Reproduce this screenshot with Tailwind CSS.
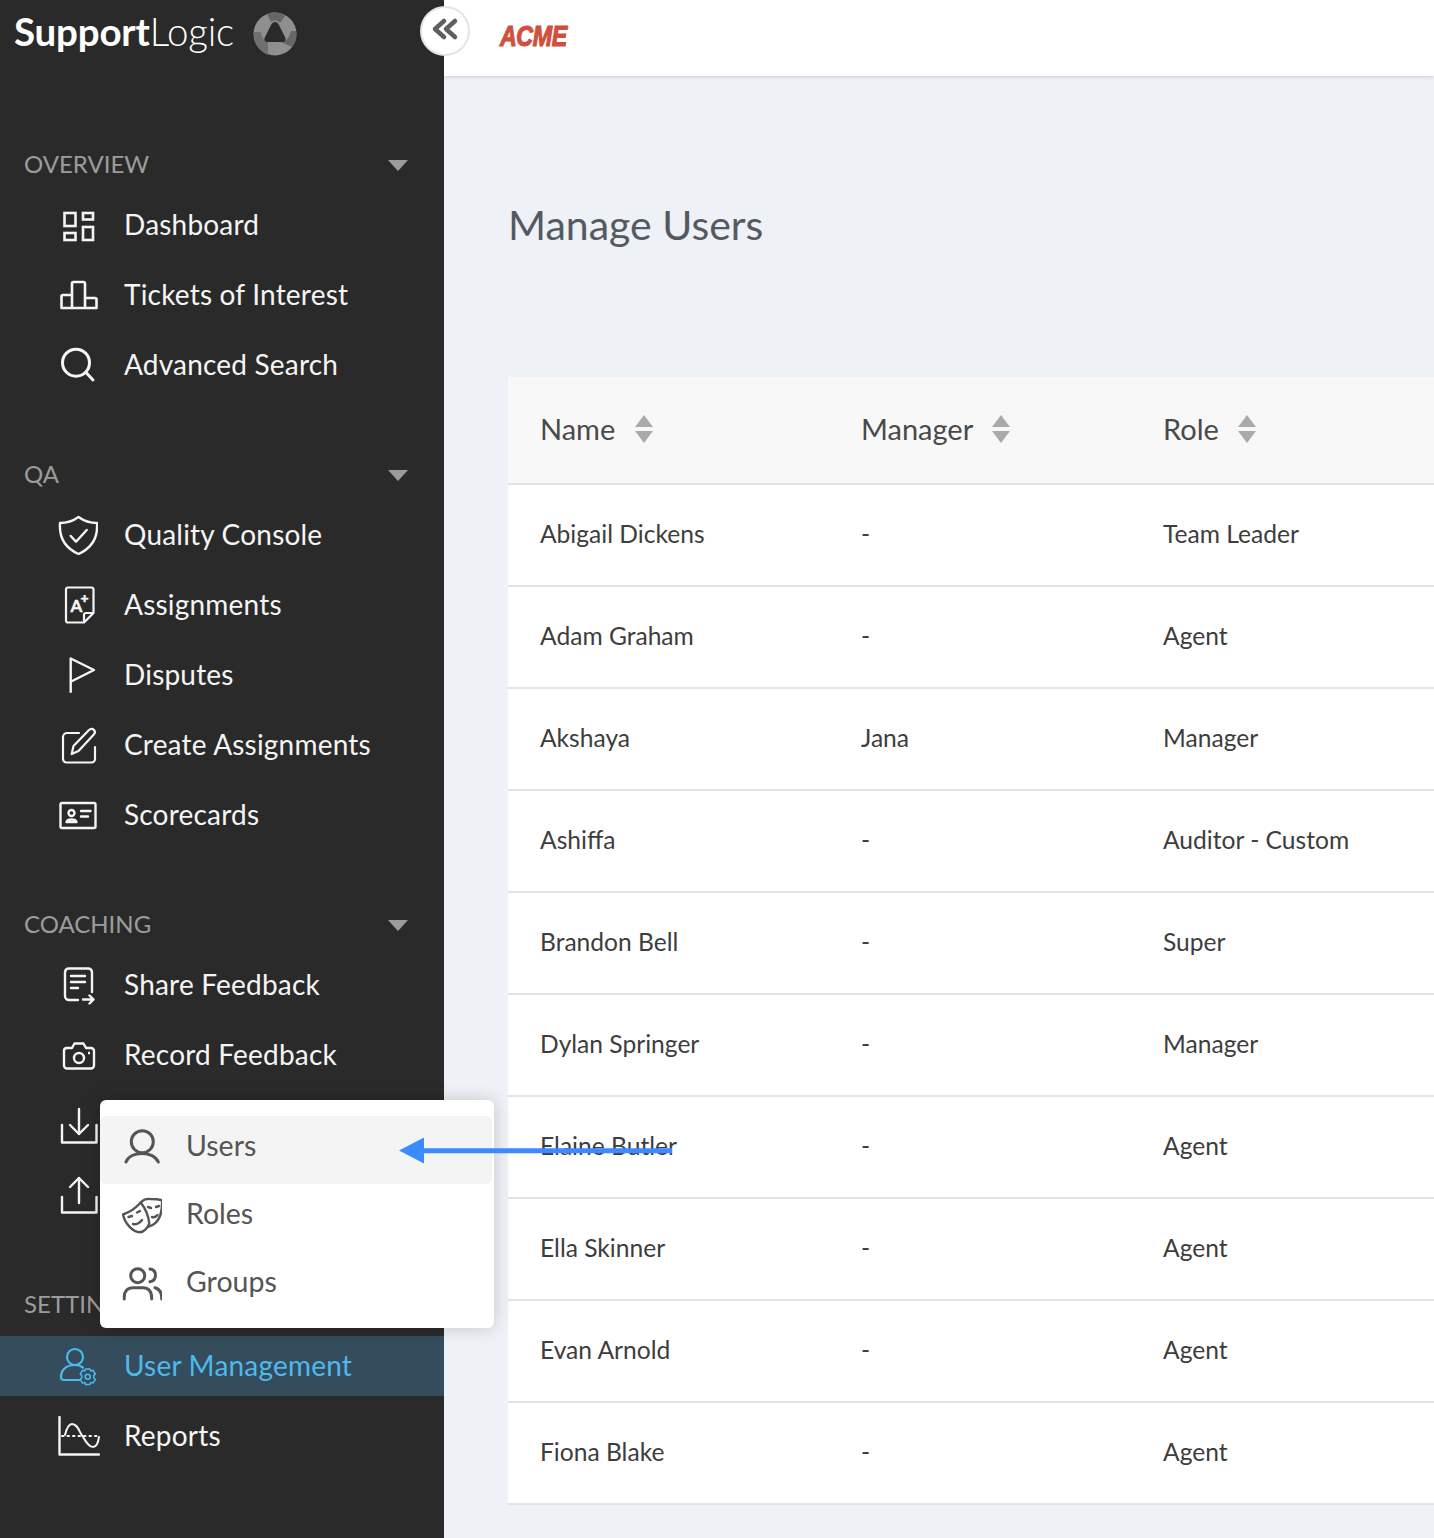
<!DOCTYPE html>
<html lang="en">
  <head>
    <meta charset="UTF-8" />
    <meta name="viewport" content="width=device-width, initial-scale=1.0" />
    <title>Manage Users</title>
    <script src="https://cdn.jsdelivr.net/npm/@tailwindcss/browser@4"></script>
  </head>
  <body class="font-['Lato',sans-serif]">
    <div class="relative flex w-[1434px] h-[1538px] overflow-hidden bg-[#eef1f6]">
      <!-- sidebar -->
      <aside class="w-[444px] shrink-0 bg-[#2a2a2a] text-[#f5f5f5] text-[28px] tracking-[0.2px] [&_a>span]:pb-[2px]">
        <div class="h-[140px] pl-[14px] pt-[8px] flex items-start gap-[20px]">
          <span class="text-[38.5px] leading-[46px] text-white tracking-[-0.2px]"><span class="font-bold">Support</span><span class="font-light">Logic</span></span>
          <svg class="w-[44px] h-[44px] mt-[4px] -ml-px" viewBox="0 0 44 44">
            <circle cx="22" cy="22" r="21.500" fill="#8f8f8f" />
            <path d="M14 2 C20 -1 28 0 32 4 L27 11 C24 8 21 8 18 10 Z" fill="#666" />
            <path d="M1 20 C0 30 6 39 15 43 L15 30 C11 29 8 25 8 20 Z" fill="#707070" />
            <path d="M43 19 C44 26 42 31 39 35 L28 30 C33 30 36 26 38 19 Z" fill="#666" />
            <path d="M22 10 C24 10 25.500 11.500 27 15 L32 25 C33.500 28 32 30 29 30 L15 30 C12 30 10.500 28 12 25 L17 15 C18.500 11.500 20 10 22 10 Z" fill="#2a2a2a" />
          </svg>
        </div>

        <section>
          <div class="h-[50px] pl-[24px] pr-[36px] pb-[2px] flex items-center justify-between text-[24px] tracking-normal text-[#9c9c9c]">
            <span>OVERVIEW</span>
            <span class="w-0 h-0 border-x-[10px] border-x-transparent border-t-[11px] border-t-[#9c9c9c] translate-y-px"></span>
          </div>
          <a class="h-[70px] pl-[58px] flex items-center gap-[26px]">
            <svg class="w-10 h-10" viewBox="0 0 40 40" fill="none" stroke="currentColor" stroke-width="2.600">
              <rect x="6.500" y="8" width="11" height="13" /><rect x="25" y="8" width="10" height="6.500" />
              <rect x="6.500" y="28" width="11" height="7" /><rect x="25" y="22" width="10" height="13" />
            </svg>
            <span>Dashboard</span>
          </a>
          <a class="h-[70px] pl-[58px] flex items-center gap-[26px]">
            <svg class="w-10 h-10" viewBox="0 0 40 40" fill="none" stroke="currentColor" stroke-width="2.600" stroke-linejoin="round">
              <path d="M14 33H3.500V21.500A1.500 1.500 0 0 1 5 20H14M14 33V8.500A1.500 1.500 0 0 1 15.500 7H25.500A1.500 1.500 0 0 1 27 8.500V33M14 33H27M27 23H37A1.500 1.500 0 0 1 38.500 24.500V33H27" />
            </svg>
            <span>Tickets of Interest</span>
          </a>
          <a class="h-[70px] pl-[58px] flex items-center gap-[26px]">
            <svg class="w-10 h-10" viewBox="0 0 40 40" fill="none" stroke="currentColor" stroke-width="3" stroke-linecap="round">
              <circle cx="18" cy="17.700" r="13.500" /><path d="M28 27.500L35 35" />
            </svg>
            <span>Advanced Search</span>
          </a>
        </section>

        <section class="mt-[50px]">
          <div class="h-[50px] pl-[24px] pr-[36px] pb-[2px] flex items-center justify-between text-[24px] tracking-normal text-[#9c9c9c]">
            <span>QA</span>
            <span class="w-0 h-0 border-x-[10px] border-x-transparent border-t-[11px] border-t-[#9c9c9c] translate-y-px"></span>
          </div>
          <a class="h-[70px] pl-[58px] flex items-center gap-[26px]">
            <svg class="w-10 h-10" viewBox="0 0 40 40" fill="none" stroke="currentColor" stroke-width="2.400" stroke-linecap="round" stroke-linejoin="round">
              <path d="M20.500 2C26 6 33 8 39 8C40 22 34 33 20.500 39C7 33 1 22 2 8C8 8 15 6 20.500 2Z" /><path d="M12.700 21L18 26.700L28.700 15" />
            </svg>
            <span>Quality Console</span>
          </a>
          <a class="h-[70px] pl-[58px] flex items-center gap-[26px]">
            <svg class="w-10 h-10" viewBox="0 0 40 40" fill="none" stroke="currentColor" stroke-width="2.200" stroke-linejoin="round">
              <path d="M10 2.500H33.500A2 2 0 0 1 35.500 4.500V28L26 37.500H10A2 2 0 0 1 8 35.500V4.500A2 2 0 0 1 10 2.500Z" /><path d="M35.500 28H28A2 2 0 0 0 26 30V37.500" />
              <text x="12.500" y="27" fill="currentColor" stroke="currentColor" stroke-width="0.500" font-size="17" font-weight="700">A</text>
              <text x="22.500" y="18" fill="currentColor" stroke="currentColor" stroke-width="0.500" font-size="14" font-weight="900">+</text>
            </svg>
            <span>Assignments</span>
          </a>
          <a class="h-[70px] pl-[58px] flex items-center gap-[26px]">
            <svg class="w-10 h-10" viewBox="0 0 40 40" fill="none" stroke="currentColor" stroke-width="2.400" stroke-linejoin="round">
              <path d="M12.700 37.700V3.500L36 15L12.700 26.700" />
            </svg>
            <span>Disputes</span>
          </a>
          <a class="h-[70px] pl-[58px] flex items-center gap-[26px]">
            <svg class="w-10 h-10" viewBox="0 0 40 40" fill="none" stroke="currentColor" stroke-width="2.200" stroke-linecap="round" stroke-linejoin="round">
              <path d="M21 8H9A4 4 0 0 0 5 12V34A3.500 3.500 0 0 0 8.500 37.500H33.500A3.500 3.500 0 0 0 37 34V22" />
              <path d="M13.700 29L15.500 21L31 5C32.500 3.500 34.500 3.500 35.800 4.800C37.200 6.200 37.200 8 35.800 9.500L20.500 26Z" />
            </svg>
            <span>Create Assignments</span>
          </a>
          <a class="h-[70px] pl-[58px] flex items-center gap-[26px]">
            <svg class="w-10 h-10" viewBox="0 0 40 40" fill="none" stroke="currentColor" stroke-width="2.400" stroke-linecap="round" stroke-linejoin="round">
              <rect x="2.500" y="8" width="35" height="25" rx="1.500" /><circle cx="13.500" cy="18" r="3" />
              <path d="M8.500 27C9.500 23.500 17.500 23.500 18.500 27Z" /><path d="M23 16H32.500M23 21.500H30" />
            </svg>
            <span>Scorecards</span>
          </a>
        </section>

        <section class="mt-[50px]">
          <div class="h-[50px] pl-[24px] pr-[36px] pb-[2px] flex items-center justify-between text-[24px] tracking-normal text-[#9c9c9c]">
            <span>COACHING</span>
            <span class="w-0 h-0 border-x-[10px] border-x-transparent border-t-[11px] border-t-[#9c9c9c] translate-y-px"></span>
          </div>
          <a class="h-[70px] pl-[58px] flex items-center gap-[26px]">
            <svg class="w-10 h-10" viewBox="0 0 40 40" fill="none" stroke="currentColor" stroke-width="2.400" stroke-linecap="round" stroke-linejoin="round">
              <path d="M20 35H11A4 4 0 0 1 7 31V7A4 4 0 0 1 11 3.500H30A4 4 0 0 1 34 7V27" />
              <path d="M13 11H27M13 17H27M13 23H20M25 34.500H35.500M31.500 30.500L35.500 34.500L31.500 38.500" />
            </svg>
            <span>Share Feedback</span>
          </a>
          <a class="h-[70px] pl-[58px] flex items-center gap-[26px]">
            <svg class="w-10 h-10" viewBox="0 0 40 40" fill="none" stroke="currentColor" stroke-width="2.400" stroke-linejoin="round">
              <path d="M8 13H14L16.500 8.500H25.500L28 13H33A3 3 0 0 1 36 16V30.500A3 3 0 0 1 33 33.500H9A3 3 0 0 1 6 30.500V16A3 3 0 0 1 8 13Z" />
              <circle cx="21" cy="23" r="5" /><path d="M30 18H32" />
            </svg>
            <span>Record Feedback</span>
          </a>
          <a class="h-[70px] pl-[58px] flex items-center gap-[26px]">
            <svg class="w-10 h-10" viewBox="0 0 40 40" fill="none" stroke="currentColor" stroke-width="2.400" stroke-linecap="round" stroke-linejoin="round">
              <path d="M21 4V29M12 20L21 29L30 20M4 20V37.500H38.500V20" />
            </svg>
          </a>
          <a class="h-[70px] pl-[58px] flex items-center gap-[26px]">
            <svg class="w-10 h-10" viewBox="0 0 40 40" fill="none" stroke="currentColor" stroke-width="2.400" stroke-linecap="round" stroke-linejoin="round">
              <path d="M21 3V28M12 12L21 3L30 12M4 22V37.500H38.500V22" />
            </svg>
          </a>
        </section>

        <section class="mt-[50px]">
          <div class="h-[50px] pl-[24px] pb-[2px] flex items-center text-[24px] tracking-normal text-[#9c9c9c]">
            <span>SETTINGS</span>
          </div>
          <a class="mt-[6px] h-[60px] pl-[58px] flex items-center gap-[26px] bg-[#344c5c] text-[#4fb9ee]">
            <svg class="w-10 h-10" viewBox="0 0 40 40" fill="none" stroke="currentColor" stroke-width="2.200" stroke-linecap="round" stroke-linejoin="round">
              <circle cx="17" cy="11" r="8" />
              <path d="M22 34H5.500A3 3 0 0 1 3 31C3 24 8 19 17 19C20 19 23 20 25 21.500" />
              <circle cx="29.700" cy="30.700" r="2.500" stroke-width="1.500" />
              <path d="M27.500 23H32L32.800 25L35 24.300L37.300 28L35.700 29.600V31.800L37.300 33.400L35 37.100L32.800 36.400L32 38.400H27.500L26.700 36.400L24.500 37.100L22.200 33.400L23.800 31.800V29.600L22.200 28L24.500 24.300L26.700 25Z" stroke-width="1.500" />
            </svg>
            <span>User Management</span>
          </a>
          <a class="mt-[5px] h-[70px] pl-[58px] flex items-center gap-[26px]">
            <svg class="w-[42px] h-10 -mr-[2px]" viewBox="0 0 42 40" fill="none" stroke="currentColor" stroke-width="2.400" stroke-linecap="round" stroke-linejoin="round">
              <path d="M1.500 1V38.500H41" />
              <path d="M7 19C9 11 11 8 14 8C20 8 21 16 25 21C28 26 31 31 35 31C38 31 40 28 41 21" stroke-width="2" />
              <path d="M4 20H41" stroke-dasharray="1.500 4" stroke-width="2" />
            </svg>
            <span>Reports</span>
          </a>
        </section>
      </aside>

      <!-- main -->
      <main class="flex-1 min-w-0">
        <header class="h-[76px] bg-white shadow-[0_1px_4px_rgba(0,0,0,0.15)] flex items-center pl-[56px] pb-[4px]">
          <span class="font-['Liberation_Sans',sans-serif] font-bold italic text-[29px] leading-none text-[#d0503c] [-webkit-text-stroke:1.200px_#d0503c] origin-left scale-x-[0.8] tracking-[-0.5px]">ACME</span>
        </header>

        <h1 class="h-[301px] pl-[64px] pt-[123px] text-[41px] leading-[52px] text-[#555a60]">Manage Users</h1>

        <div class="ml-[64px] w-[1000px] text-[24.600px] text-[#3d3d3d] bg-white">
          <div class="h-[108px] grid grid-cols-[321px_302px_1fr] pl-[32px] pb-[2px] items-center bg-[#f8f8f8] border-b-2 border-[#e3e3e3] text-[29px] text-[#4a4a4a]">
            <div class="flex items-center gap-[20px]">
              <span>Name</span>
              <span class="flex flex-col gap-[4px]">
                <span class="w-0 h-0 border-x-[9px] border-x-transparent border-b-[12px] border-b-[#aaa]"></span>
                <span class="w-0 h-0 border-x-[9px] border-x-transparent border-t-[12px] border-t-[#aaa]"></span>
              </span>
            </div>
            <div class="flex items-center gap-[19px]">
              <span>Manager</span>
              <span class="flex flex-col gap-[4px]">
                <span class="w-0 h-0 border-x-[9px] border-x-transparent border-b-[12px] border-b-[#aaa]"></span>
                <span class="w-0 h-0 border-x-[9px] border-x-transparent border-t-[12px] border-t-[#aaa]"></span>
              </span>
            </div>
            <div class="flex items-center gap-[19px]">
              <span>Role</span>
              <span class="flex flex-col gap-[4px]">
                <span class="w-0 h-0 border-x-[9px] border-x-transparent border-b-[12px] border-b-[#aaa]"></span>
                <span class="w-0 h-0 border-x-[9px] border-x-transparent border-t-[12px] border-t-[#aaa]"></span>
              </span>
            </div>
          </div>
          <div class="h-[102px] grid grid-cols-[321px_302px_1fr] pl-[32px] pb-[2px] items-center border-b-2 border-[#e3e3e3]"><span>Abigail Dickens</span><span>-</span><span>Team Leader</span></div>
          <div class="h-[102px] grid grid-cols-[321px_302px_1fr] pl-[32px] pb-[2px] items-center border-b-2 border-[#e3e3e3]"><span>Adam Graham</span><span>-</span><span>Agent</span></div>
          <div class="h-[102px] grid grid-cols-[321px_302px_1fr] pl-[32px] pb-[2px] items-center border-b-2 border-[#e3e3e3]"><span>Akshaya</span><span>Jana</span><span>Manager</span></div>
          <div class="h-[102px] grid grid-cols-[321px_302px_1fr] pl-[32px] pb-[2px] items-center border-b-2 border-[#e3e3e3]"><span>Ashiffa</span><span>-</span><span>Auditor - Custom</span></div>
          <div class="h-[102px] grid grid-cols-[321px_302px_1fr] pl-[32px] pb-[2px] items-center border-b-2 border-[#e3e3e3]"><span>Brandon Bell</span><span>-</span><span>Super</span></div>
          <div class="h-[102px] grid grid-cols-[321px_302px_1fr] pl-[32px] pb-[2px] items-center border-b-2 border-[#e3e3e3]"><span>Dylan Springer</span><span>-</span><span>Manager</span></div>
          <div class="h-[102px] grid grid-cols-[321px_302px_1fr] pl-[32px] pb-[2px] items-center border-b-2 border-[#e3e3e3]"><span>Elaine Butler</span><span>-</span><span>Agent</span></div>
          <div class="h-[102px] grid grid-cols-[321px_302px_1fr] pl-[32px] pb-[2px] items-center border-b-2 border-[#e3e3e3]"><span>Ella Skinner</span><span>-</span><span>Agent</span></div>
          <div class="h-[102px] grid grid-cols-[321px_302px_1fr] pl-[32px] pb-[2px] items-center border-b-2 border-[#e3e3e3]"><span>Evan Arnold</span><span>-</span><span>Agent</span></div>
          <div class="h-[102px] grid grid-cols-[321px_302px_1fr] pl-[32px] pb-[2px] items-center border-b-2 border-[#e3e3e3]"><span>Fiona Blake</span><span>-</span><span>Agent</span></div>
        </div>
      </main>

      <!-- collapse toggle -->
      <button class="absolute left-[420px] top-[6px] w-[50px] h-[50px] rounded-full bg-white border-2 border-[#e4e4e4] flex items-center justify-center">
        <svg class="w-[30px] h-[30px] -mt-[2px]" viewBox="0 0 30 30" fill="none" stroke="#5f5f5f" stroke-width="4.500" stroke-linecap="round" stroke-linejoin="round">
          <path d="M14 6L5 14L14 22M25 6L16 14L25 22" />
        </svg>
      </button>

      <!-- popover menu -->
      <div class="absolute left-[100px] top-[1100px] w-[394px] h-[228px] pt-[16px] bg-white rounded-[6px] shadow-[0_0_18px_rgba(0,0,0,0.18)] text-[28.500px] text-[#555]">
        <div class="w-[392px] h-[68px] pb-[10px] pl-[22px] flex items-center gap-[24px] bg-[#f4f4f4] rounded-[6px]">
          <svg class="w-10 h-10 -my-1 translate-y-px" viewBox="0 0 40 40" fill="none" stroke="currentColor" stroke-width="3" stroke-linecap="round">
            <circle cx="20.300" cy="15.700" r="11" /><path d="M4 36C8 24.500 32 24.500 36.300 36" />
          </svg>
          <span>Users</span>
        </div>
        <div class="h-[68px] pb-[10px] pl-[22px] flex items-center gap-[24px]">
          <svg class="w-10 h-10 -my-1 translate-y-px" viewBox="0 0 40 40" fill="none" stroke="currentColor" stroke-width="2.400" stroke-linecap="round" stroke-linejoin="round">
            <path d="M1 20.500C8 18 14 14 18.700 8.500C23 14 26.500 22 27.300 29.300C26 34 22 38 18 38.300C11 38 3 30 1 20.500Z" />
            <path d="M18.700 8.500C21 6 24 4.500 28 5C32 5 36 5 40 6.300C40.500 16 38 25 33 29.300C31 31 28 32 25.500 33" />
            <path d="M6.500 23L10 22M15 18.500L18 17M11 30C14 31 18 29 20 26" />
            <path d="M26 13L29 14M34 13L37 12M30 23C32 23.500 34 23 35.500 21" />
          </svg>
          <span>Roles</span>
        </div>
        <div class="h-[68px] pb-[10px] pl-[22px] flex items-center gap-[24px]">
          <svg class="w-10 h-10 -my-1 translate-y-px" viewBox="0 0 40 40" fill="none" stroke="currentColor" stroke-width="3" stroke-linecap="round">
            <circle cx="15.700" cy="13.700" r="7" /><path d="M28 7C31.500 7.500 33.500 10 33.500 13.200C33.500 16.500 31.500 19 28 19.700" />
            <path d="M2.300 37C1.500 29 6 25.700 11 25.700H21C26 25.700 30 29 29.700 37M33 25.700C37.500 27 40 31 39.700 37" />
          </svg>
          <span>Groups</span>
        </div>
      </div>

      <!-- annotation arrow -->
      <svg class="absolute left-[395px] top-[1130px] w-[285px] h-[40px]" viewBox="0 0 285 40">
        <path d="M4 20.500L29 7.500V18.250H277V23.250H29V33.500Z" fill="#3b8bff" />
      </svg>
    </div>
  </body>
</html>
